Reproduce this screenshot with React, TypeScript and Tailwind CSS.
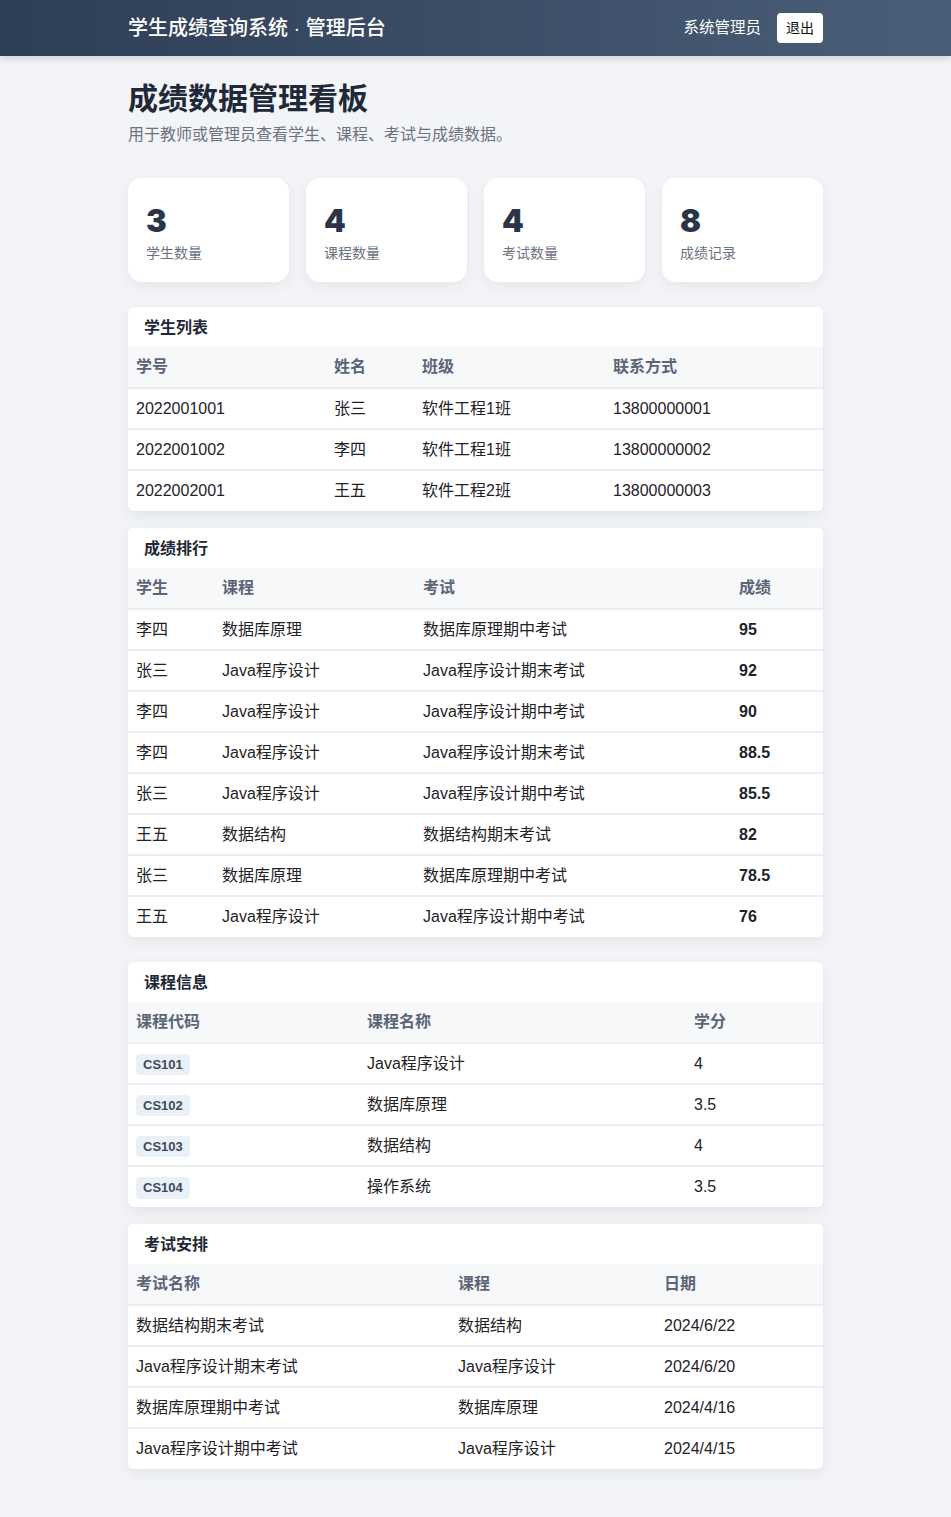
import React from 'react';

const stats = [
	{ value: 3, label: '学生数量' },
	{ value: 4, label: '课程数量' },
	{ value: 4, label: '考试数量' },
	{ value: 8, label: '成绩记录' },
];

const students = [
	['2022001001', '张三', '软件工程1班', '13800000001'],
	['2022001002', '李四', '软件工程1班', '13800000002'],
	['2022002001', '王五', '软件工程2班', '13800000003'],
];

const ranking = [
	['李四', '数据库原理', '数据库原理期中考试', '95'],
	['张三', 'Java程序设计', 'Java程序设计期末考试', '92'],
	['李四', 'Java程序设计', 'Java程序设计期中考试', '90'],
	['李四', 'Java程序设计', 'Java程序设计期末考试', '88.5'],
	['张三', 'Java程序设计', 'Java程序设计期中考试', '85.5'],
	['王五', '数据结构', '数据结构期末考试', '82'],
	['张三', '数据库原理', '数据库原理期中考试', '78.5'],
	['王五', 'Java程序设计', 'Java程序设计期中考试', '76'],
];

const courses = [
	['CS101', 'Java程序设计', '4'],
	['CS102', '数据库原理', '3.5'],
	['CS103', '数据结构', '4'],
	['CS104', '操作系统', '3.5'],
];

const exams = [
	['数据结构期末考试', '数据结构', '2024/6/22'],
	['Java程序设计期末考试', 'Java程序设计', '2024/6/20'],
	['数据库原理期中考试', '数据库原理', '2024/4/16'],
	['Java程序设计期中考试', 'Java程序设计', '2024/4/15'],
];

function Panel({ title, className = '', children }: { title: string; className?: string; children: React.ReactNode }) {
	return (
		<section className={`bg-white rounded-md shadow-[0_4px_14px_rgba(15,23,42,0.07)] overflow-hidden ${className}`}>
			<h2 className="h-[40px] flex items-center px-4 pt-[1px] text-[16px] font-bold text-[#1f2937]">{title}</h2>
			{children}
		</section>
	);
}

function Table({ heads, widths, rows, renderCell }: {
	heads: string[];
	widths: string[];
	rows: string[][];
	renderCell?: (value: string, col: number) => React.ReactNode;
}) {
	return (
		<table className="w-full table-fixed border-collapse text-[16px]">
			<colgroup>
				{widths.map((w, i) => <col key={i} style={{ width: w }} />)}
			</colgroup>
			<thead>
				<tr className="bg-[#f6f8fa] border-b-2 border-[#eceef1]">
					{heads.map((h) => (
						<th key={h} className="h-[41px] px-2 text-left font-semibold text-[#5b6577]">{h}</th>
					))}
				</tr>
			</thead>
			<tbody>
				{rows.map((row, r) => (
					<tr key={r} className={r < rows.length - 1 ? 'border-b-2 border-[#eceef1]' : ''}>
						{row.map((cell, c) => (
							<td key={c} className="h-[41px] px-2 text-[#1f2328]">
								{renderCell ? renderCell(cell, c) : cell}
							</td>
						))}
					</tr>
				))}
			</tbody>
		</table>
	);
}

export default function App() {
	return (
		<div className="min-h-[1517px] bg-[#f2f4f7] font-['Liberation_Sans','Noto_Sans_CJK_SC',sans-serif]">
			<header className="h-[56px] bg-gradient-to-r from-[#2d3e55] to-[#4b5e78] shadow-[0_2px_8px_rgba(15,23,42,0.18)]">
				<div className="w-[695px] mx-auto h-full flex items-center justify-between">
					<div className="text-white text-[20px] font-medium">学生成绩查询系统 · 管理后台</div>
					<div className="flex items-center gap-4">
						<span className="text-white text-[15.5px]">系统管理员</span>
						<button className="bg-white rounded text-[14px] text-[#111] w-[46px] h-[30px]">退出</button>
					</div>
				</div>
			</header>

			<main className="w-[695px] mx-auto pt-[23px] pb-[49px]">
				<h1 className="text-[30px] font-bold text-[#1f2937] leading-[40px]">成绩数据管理看板</h1>
				<p className="mt-[3px] text-[16px] leading-[26px] text-[#6b7280]">用于教师或管理员查看学生、课程、考试与成绩数据。</p>

				<div className="mt-[30px] grid grid-cols-4 gap-[17px]">
					{stats.map((s) => (
						<div key={s.label} className="h-[104px] bg-white rounded-[14px] shadow-[0_4px_14px_rgba(15,23,42,0.06)] px-[18px] pt-[25px]">
							<div className="font-['Inter','Liberation_Sans',sans-serif] text-[31px] font-black text-[#2a3548] leading-[36px]">{s.value}</div>
							<div className="mt-[4px] text-[14px] text-[#6b7280]">{s.label}</div>
						</div>
					))}
				</div>

				<Panel title="学生列表" className="mt-[25px]">
					<Table heads={['学号', '姓名', '班级', '联系方式']} widths={['198px', '88px', '191px', '218px']} rows={students} />
				</Panel>

				<Panel title="成绩排行" className="mt-[17px]">
					<Table
						heads={['学生', '课程', '考试', '成绩']}
						widths={['86px', '201px', '316px', '92px']}
						rows={ranking}
						renderCell={(v, c) => (c === 3 ? <span className="font-bold">{v}</span> : v)}
					/>
				</Panel>

				<Panel title="课程信息" className="mt-[25px]">
					<Table
						heads={['课程代码', '课程名称', '学分']}
						widths={['231px', '327px', '137px']}
						rows={courses}
						renderCell={(v, c) =>
							c === 0 ? (
								<span className="inline-block rounded bg-[#eaf0f7] px-[7px] py-[1px] text-[13px] font-bold text-[#3d4a5c]">{v}</span>
							) : (
								v
							)
						}
					/>
				</Panel>

				<Panel title="考试安排" className="mt-[17px]">
					<Table heads={['考试名称', '课程', '日期']} widths={['322px', '206px', '167px']} rows={exams} />
				</Panel>
			</main>
		</div>
	);
}
